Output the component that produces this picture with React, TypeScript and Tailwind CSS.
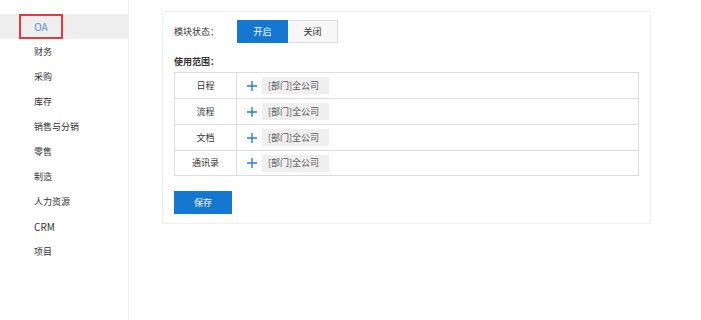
import { useState } from 'react'

const menu = ['OA', '财务', '采购', '库存', '销售与分销', '零售', '制造', '人力资源', 'CRM', '项目']
const scopes = ['日程', '流程', '文档', '通讯录']

function Plus() {
  return (
    <svg width="10" height="10" viewBox="0 0 10 10" className="shrink-0">
      <path d="M5 0v10M0 5h10" stroke="#2a7fd4" strokeWidth="1.4" />
    </svg>
  )
}

export default function App() {
  const [enabled, setEnabled] = useState(true)

  return (
    <div
      className="flex h-[320px] w-[701px] bg-white text-[9px] text-[#333]"
      style={{ fontFamily: '"Noto Sans CJK SC", "Noto Sans", sans-serif' }}
    >
      {/* Sidebar */}
      <div className="w-[129px] shrink-0 border-r border-[#f0f0f0] pt-[14px]">
        {menu.map((m, i) =>
          i === 0 ? (
            <div key={m} className="h-[25px] bg-[#eeeeee]">
              <div className="ml-[19px] flex h-[25px] w-[44px] items-center justify-center border-2 border-[#e8383d] text-[10px] text-[#5a8ad6]">
                {m}
              </div>
            </div>
          ) : (
            <div key={m} className={`flex h-[25px] items-center pl-[34px] ${m === 'CRM' ? 'text-[10px]' : ''}`}>
              {m}
            </div>
          )
        )}
      </div>

      {/* Main */}
      <div className="pl-[33px] pt-[11px]">
        <div className="h-[213px] w-[489px] border border-[#eeeeee] px-[11px] pt-[8px]">
          <div className="flex items-center">
            <div className="w-[63px]">模块状态：</div>
            <div className="flex">
              <button
                onClick={() => setEnabled(true)}
                className={`h-[23px] w-[51px] border ${enabled ? 'border-[#1577d0] bg-[#1577d0] text-white' : 'border-[#dcdcdc] bg-[#f7f7f7] text-[#333]'}`}
              >
                开启
              </button>
              <button
                onClick={() => setEnabled(false)}
                className={`h-[23px] w-[50px] border border-l-0 ${!enabled ? 'border-[#1577d0] bg-[#1577d0] text-white' : 'border-[#dcdcdc] bg-[#f7f7f7] text-[#333]'}`}
              >
                关闭
              </button>
            </div>
          </div>

          <div className="mt-[10px] font-bold leading-[18px]">使用范围：</div>

          <div className="mt-[1px] w-[465px] border border-[#dddddd]">
            {scopes.map((s, i) => (
              <div
                key={s}
                className={`flex ${i < scopes.length - 1 ? 'h-[26px] border-b border-[#dddddd]' : 'h-[24px]'}`}
              >
                <div className="flex w-[62px] items-center justify-center border-r border-[#dddddd]">{s}</div>
                <div className="flex items-center pl-[10px]">
                  <Plus />
                  <span className="ml-[5px] flex h-[17px] w-[67px] items-center whitespace-nowrap bg-[#efefef] pl-[6px] text-[#555]">
                    [部门]全公司
                  </span>
                </div>
              </div>
            ))}
          </div>

          <button className="mt-[15px] h-[23px] w-[58px] bg-[#1577d0] text-white">保存</button>
        </div>
      </div>
    </div>
  )
}
